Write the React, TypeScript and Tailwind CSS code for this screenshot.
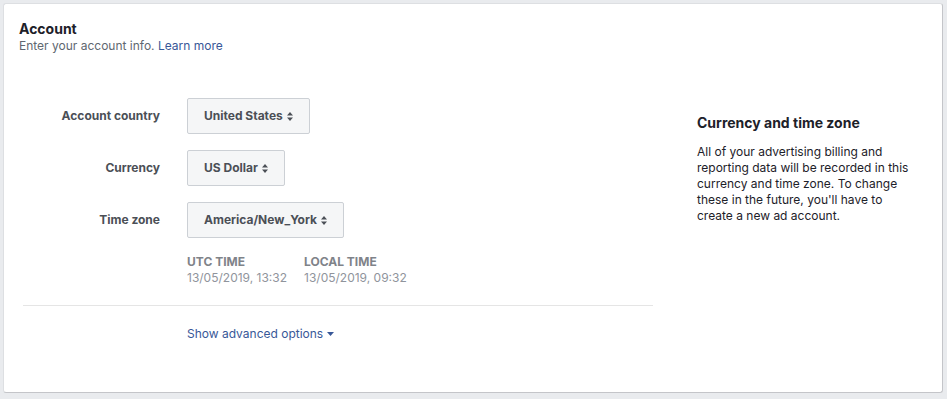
import React from 'react';

const fields = [
  { label: 'Account country', value: 'United States' },
  { label: 'Currency', value: 'US Dollar' },
  { label: 'Time zone', value: 'America/New_York' },
];

const SortIcon = () => (
  <svg width="6" height="9" viewBox="0 0 6 9" className="ml-[4px]">
    <path d="M3 0 L6 3.5 H0 Z M0 5.5 H6 L3 9 Z" fill="#4b4f56" />
  </svg>
);

const App: React.FC = () => {
  return (
    <div
      className="w-[947px] h-[399px] bg-[#e9ebee] p-[3px]"
      style={{ fontFamily: 'Inter, "Liberation Sans", Arial, sans-serif' }}
    >
      <div className="w-[940px] h-[390px] bg-white rounded-[3px] border border-[#dddfe2] border-r-[#c4c5c9] border-b-[#c4c5c9]">
        <div className="pt-[16px] pl-[15px]">
          <h2 className="text-[14px] leading-[18px] font-bold text-[#1d2129]">Account</h2>
          <p className="text-[12px] leading-[16px] text-[#606770]">
            Enter your account info. <a className="text-[#385898]">Learn more</a>
          </p>
        </div>

        <div className="flex mt-[44px]">
          <div className="ml-[19px] w-[630px]">
            <div className="flex flex-col gap-[16px]">
              {fields.map(f => (
                <div key={f.label} className="flex items-center">
                  <span className="w-[137px] text-right text-[12px] font-bold text-[#4b4f56]">{f.label}</span>
                  <button className="ml-[27px] h-[36px] px-[16px] flex items-center bg-[#f5f6f7] border border-[#ccd0d5] rounded-[2px] text-[12px] font-bold text-[#4b4f56]">
                    {f.value}
                    <SortIcon />
                  </button>
                </div>
              ))}
            </div>

            <div className="flex gap-[17px] ml-[164px] mt-[16px] text-[12px] leading-[16px]">
              <div>
                <div className="font-bold text-[#7f8389]">UTC TIME</div>
                <div className="text-[#90949c]">13/05/2019, 13:32</div>
              </div>
              <div>
                <div className="font-bold text-[#7f8389]">LOCAL TIME</div>
                <div className="text-[#90949c]">13/05/2019, 09:32</div>
              </div>
            </div>

            <div className="mt-[19px] border-t border-[#e5e5e5]" />

            <div className="ml-[164px] mt-[20px] flex items-center text-[12px] leading-[16px] text-[#385898]">
              Show advanced options
              <svg width="7" height="4" viewBox="0 0 7 4" className="ml-[4px]">
                <path d="M0 0 H7 L3.5 4 Z" fill="#385898" />
              </svg>
            </div>
          </div>

          <div className="ml-[44px] mt-[16px] w-[216px]">
            <h3 className="text-[14px] leading-[18px] font-bold text-[#1d2129]">Currency and time zone</h3>
            <p className="mt-[12px] text-[12px] leading-[16px] text-[#1d2129]">
              All of your advertising billing and reporting data will be recorded in this currency and time zone. To change these in the future, you'll have to create a new ad account.
            </p>
          </div>
        </div>
      </div>
    </div>
  );
};

export default App;
